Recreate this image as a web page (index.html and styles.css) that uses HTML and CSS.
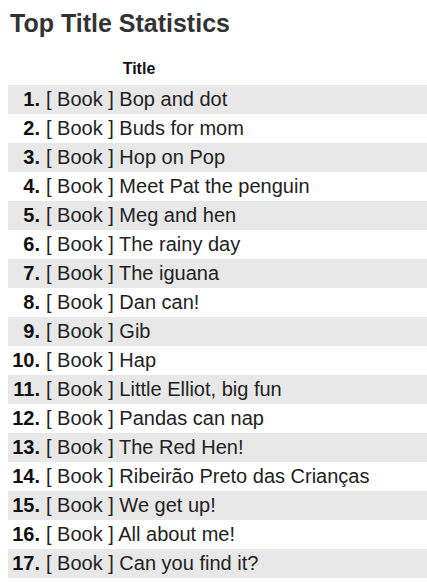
FILE: index.html
```html
<!DOCTYPE html>
<html>
<head>
<meta charset="utf-8">
<link rel="stylesheet" href="styles.css">
</head>
<body>
<h2 class="heading">Top Title Statistics</h2>
<table class="stats">
  <thead>
    <tr><th class="num"></th><th class="title">Title</th><th class="rest"></th></tr>
  </thead>
  <tbody>
    <tr><td class="num">1.</td><td class="title" colspan="2">[ Book ] Bop and dot</td></tr>
    <tr><td class="num">2.</td><td class="title" colspan="2">[ Book ] Buds for mom</td></tr>
    <tr><td class="num">3.</td><td class="title" colspan="2">[ Book ] Hop on Pop</td></tr>
    <tr><td class="num">4.</td><td class="title" colspan="2">[ Book ] Meet Pat the penguin</td></tr>
    <tr><td class="num">5.</td><td class="title" colspan="2">[ Book ] Meg and hen</td></tr>
    <tr><td class="num">6.</td><td class="title" colspan="2">[ Book ] The rainy day</td></tr>
    <tr><td class="num">7.</td><td class="title" colspan="2">[ Book ] The iguana</td></tr>
    <tr><td class="num">8.</td><td class="title" colspan="2">[ Book ] Dan can!</td></tr>
    <tr><td class="num">9.</td><td class="title" colspan="2">[ Book ] Gib</td></tr>
    <tr><td class="num">10.</td><td class="title" colspan="2">[ Book ] Hap</td></tr>
    <tr><td class="num">11.</td><td class="title" colspan="2">[ Book ] Little Elliot, big fun</td></tr>
    <tr><td class="num">12.</td><td class="title" colspan="2">[ Book ] Pandas can nap</td></tr>
    <tr><td class="num">13.</td><td class="title" colspan="2">[ Book ] The Red Hen!</td></tr>
    <tr><td class="num">14.</td><td class="title" colspan="2">[ Book ] Ribeirão Preto das Crianças</td></tr>
    <tr><td class="num">15.</td><td class="title" colspan="2">[ Book ] We get up!</td></tr>
    <tr><td class="num">16.</td><td class="title" colspan="2">[ Book ] All about me!</td></tr>
    <tr><td class="num">17.</td><td class="title" colspan="2">[ Book ] Can you find it?</td></tr>
  </tbody>
</table>
</body>
</html>
```
FILE: styles.css
```css
html, body {
  margin: 0;
  padding: 0;
  overflow: hidden;
}
body {
  padding-left: 8px;
  font-family: "Liberation Sans", Arial, sans-serif;
  color: #222;
  background: #fff;
}
.heading {
  margin: 0;
  padding-top: 8px;
  padding-left: 2px;
  font-size: 25px;
  line-height: 30px;
  font-weight: bold;
  color: #333;
}
.stats {
  border-collapse: collapse;
  width: 419px;
  table-layout: fixed;
  margin-top: 15px;
}
.stats th {
  font-size: 16px;
  font-weight: bold;
  color: #111;
  height: 32px;
  padding: 0;
  vertical-align: middle;
}
.stats th.num { width: 36px; }
.stats th.title { width: 190px; text-align: center; }
.stats td {
  height: 29px;
  padding: 0;
  font-size: 20px;
  vertical-align: middle;
  white-space: nowrap;
}
.stats td.num {
  text-align: right;
  font-weight: bold;
  padding-right: 4px;
  color: #111;
}
.stats td.title {
  padding-left: 2px;
  color: #222;
}
.stats tbody tr:nth-child(odd) { background: #e8e8e8; }
```
